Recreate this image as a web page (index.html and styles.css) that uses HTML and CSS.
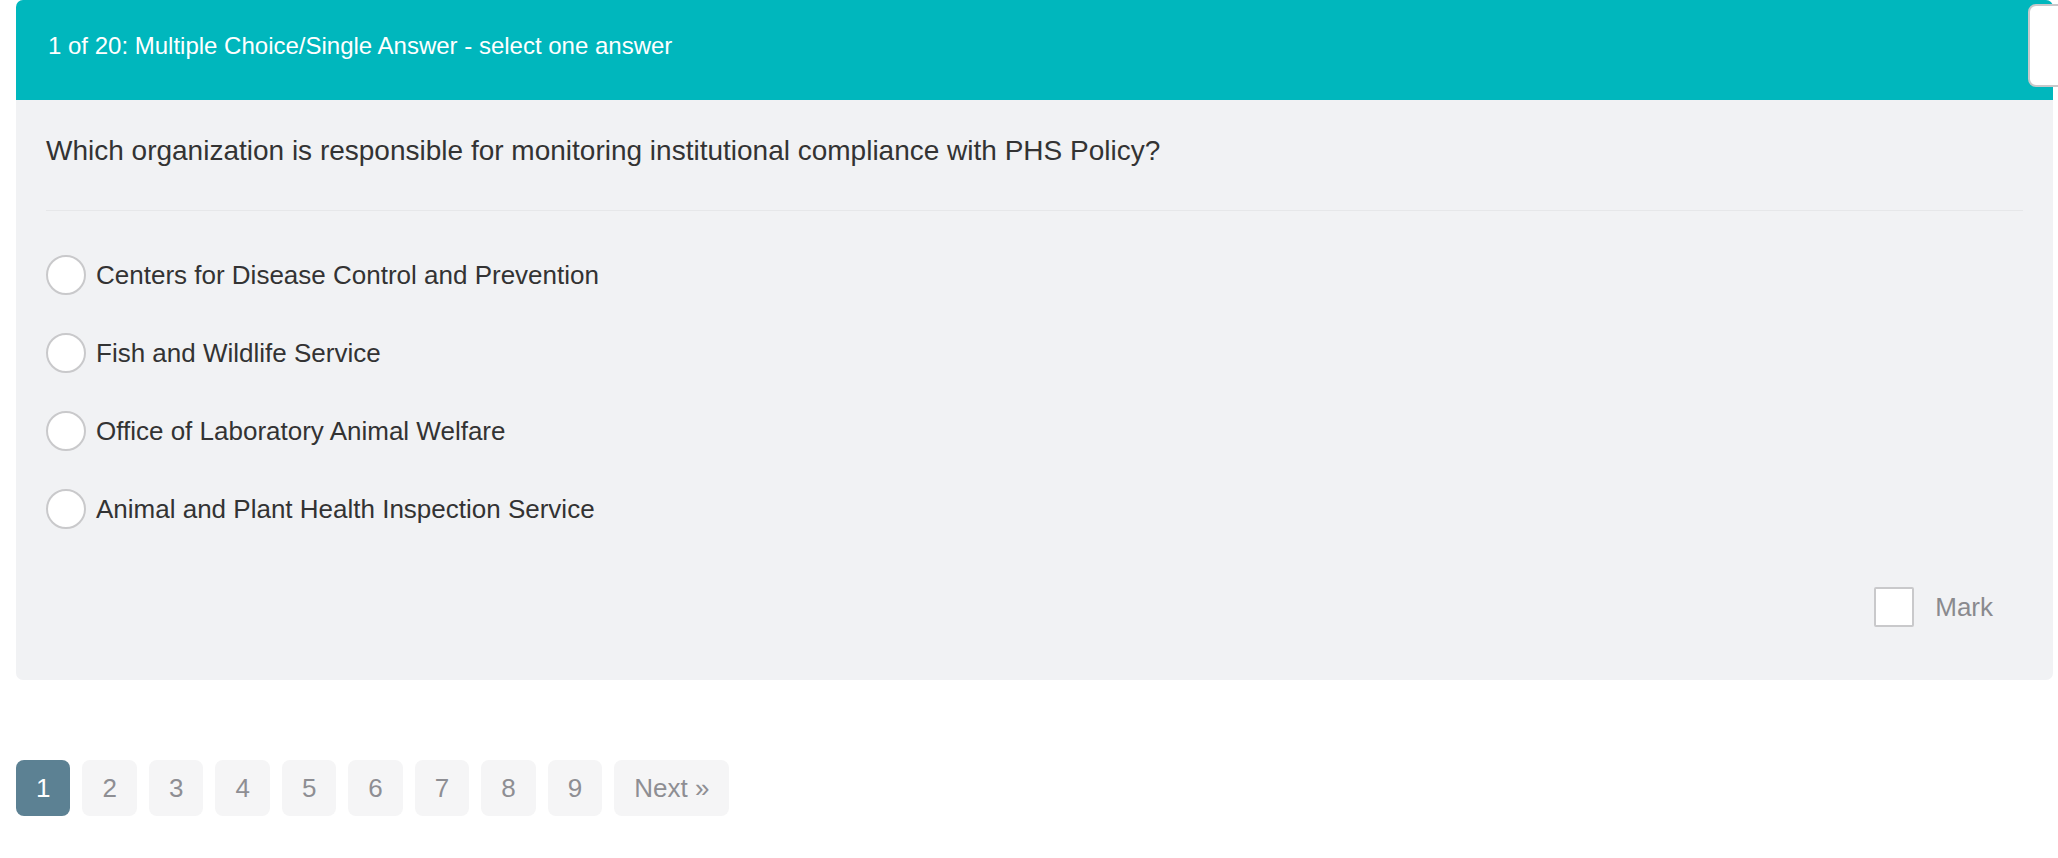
FILE: index.html
```html
<!DOCTYPE html>
<html lang="en">
<head>
<meta charset="utf-8">
<title>Quiz question</title>
<link rel="stylesheet" href="styles.css">
</head>
<body>
<div class="page">
  <section class="card">
    <header class="card-header">1 of 20: Multiple Choice/Single Answer - select one answer</header>
    <div class="card-body">
      <p class="question">Which organization is responsible for monitoring institutional compliance with PHS Policy?</p>
      <hr class="divider">
      <ul class="options">
        <li class="option"><span class="radio"></span><span class="option-text">Centers for Disease Control and Prevention</span></li>
        <li class="option"><span class="radio"></span><span class="option-text">Fish and Wildlife Service</span></li>
        <li class="option"><span class="radio"></span><span class="option-text">Office of Laboratory Animal Welfare</span></li>
        <li class="option"><span class="radio"></span><span class="option-text">Animal and Plant Health Inspection Service</span></li>
      </ul>
      <div class="mark-row">
        <span class="checkbox"></span><span class="mark-label">Mark</span>
      </div>
    </div>
  </section>
  <nav class="pagination">
    <span class="page-item active">1</span>
    <span class="page-item">2</span>
    <span class="page-item">3</span>
    <span class="page-item">4</span>
    <span class="page-item">5</span>
    <span class="page-item">6</span>
    <span class="page-item">7</span>
    <span class="page-item">8</span>
    <span class="page-item">9</span>
    <span class="page-item">Next &raquo;</span>
  </nav>
</div>
<div class="side-tab"></div>
</body>
</html>
```
FILE: styles.css
```css
html, body {
  margin: 0;
  padding: 0;
  background: #ffffff;
  font-family: "Liberation Sans", Arial, Helvetica, sans-serif;
  color: #333333;
}

.page {
  padding-left: 16px;
  width: 2037px;
}

.card {
  background: #f1f2f4;
  border-radius: 7px;
  overflow: hidden;
}

.card-header {
  background: #00b7bd;
  color: #ffffff;
  font-size: 24px;
  line-height: 30px;
  height: 100px;
  box-sizing: border-box;
  padding: 31px 32px 0 32px;
}

.card-body {
  padding: 31px 30px 53px 30px;
}

.question {
  margin: 0;
  font-size: 28px;
  line-height: 40px;
  color: #333333;
}

.divider {
  border: 0;
  border-top: 1px solid #e6e7e9;
  margin: 39px 0 0 0;
  height: 0;
}

.options {
  list-style: none;
  margin: 44px 0 0 0;
  padding: 0;
  display: flex;
  flex-direction: column;
  gap: 38px;
}

.option {
  display: flex;
  align-items: center;
  height: 40px;
}

.radio {
  width: 40px;
  height: 40px;
  box-sizing: border-box;
  border: 2px solid #c9c9cb;
  border-radius: 50%;
  background: #ffffff;
  flex: none;
}

.option-text {
  margin-left: 10px;
  font-size: 26px;
  color: #333333;
}

.mark-row {
  display: flex;
  justify-content: flex-end;
  align-items: center;
  margin-top: 58px;
  margin-right: 30px;
  height: 40px;
}

.checkbox {
  width: 40px;
  height: 40px;
  box-sizing: border-box;
  border: 2px solid #c9c9cb;
  border-radius: 2px;
  background: #ffffff;
}

.mark-label {
  margin-left: 21px;
  font-size: 26px;
  color: #8a8a8e;
}

.pagination {
  display: flex;
  gap: 12px;
  margin-top: 80px;
}

.page-item {
  height: 56px;
  min-width: 54px;
  box-sizing: border-box;
  padding: 0 20px;
  display: flex;
  align-items: center;
  justify-content: center;
  border-radius: 8px;
  background: #f5f5f6;
  color: #8e8e93;
  font-size: 26px;
}

.page-item.active {
  background: #5c8193;
  color: #ffffff;
}

.side-tab {
  position: fixed;
  left: 2028px;
  top: 4px;
  width: 60px;
  height: 83px;
  box-sizing: border-box;
  background: #ffffff;
  border: 2px solid #c8c8ca;
  border-radius: 8px;
}
```
